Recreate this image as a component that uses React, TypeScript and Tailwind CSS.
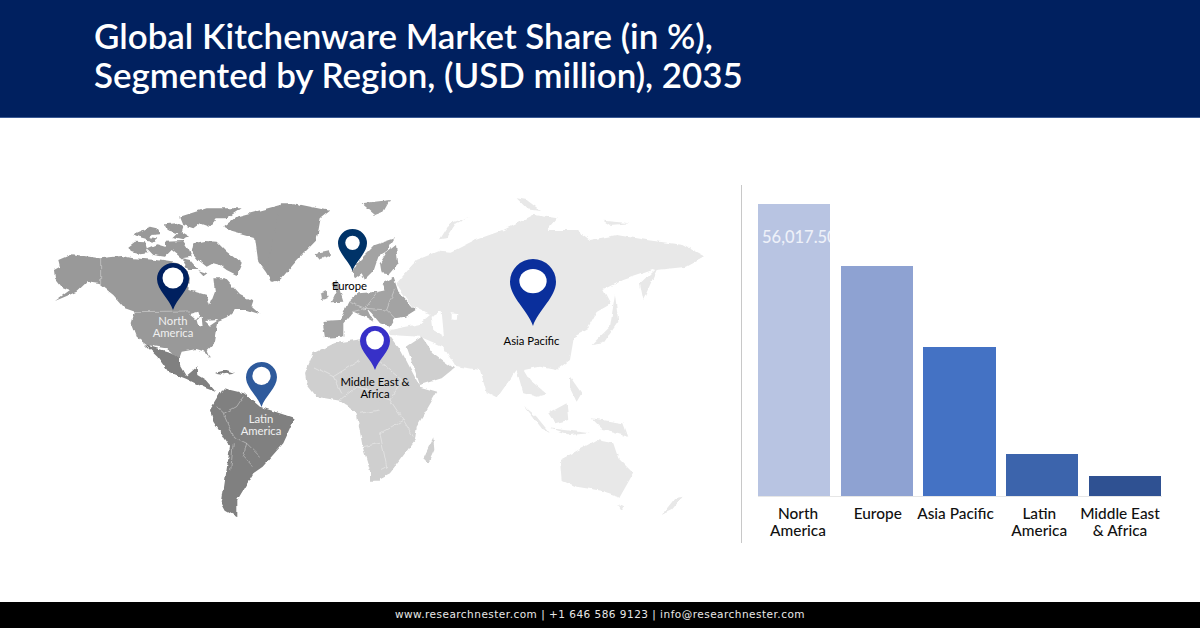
import type { ReactNode } from "react";

const font = "font-['Lato','Carlito','Liberation_Sans',sans-serif]";

const bars = [
  { name: "North America", bar: "h-[292px] bg-[#b8c4e2]", label: "w-[80px] ml-[0px]" },
  { name: "Europe", bar: "h-[230px] bg-[#8ea2d2]", label: "w-[80px] ml-[-3px]" },
  { name: "Asia Pacific", bar: "h-[149px] bg-[#4472c4]", label: "w-[90px] ml-[-10px]" },
  { name: "Latin America", bar: "h-[42px] bg-[#3c64ac]", label: "w-[80px] ml-[-5px]" },
  { name: "Middle East & Africa", bar: "h-[20px] bg-[#2f5192]", label: "w-[84px] ml-[-5px]" },
];

function Marker({ className, pin, gap, color, cy, rx, ry, text, children }: {
  className: string;
  pin: string;
  gap: string;
  color: string;
  cy: number;
  rx: number;
  ry: number;
  text: string;
  children: ReactNode;
}) {
  return (
    <div className={`absolute w-[80px] flex flex-col items-center ${className}`}>
      <svg viewBox="0 0 32 47" preserveAspectRatio="none" className={`shrink-0 ${pin}`}>
        <path d="M16 47C12.5 36 0 27 0 16A16 16 0 0 1 32 16C32 27 19.5 36 16 47Z" fill={color} />
        <ellipse cx="16" cy={cy} rx={rx} ry={ry} fill="#fff" />
      </svg>
      <p className={`text-center text-[11.3px] leading-[12px] ${gap} ${text}`}>{children}</p>
    </div>
  );
}

function WorldMap() {
  return (
    <svg viewBox="0 118 741 484" className="absolute inset-0 w-full h-full">
      <defs>
        {/* roughens the straight polygon edges into coastlines */}
        <filter id="coast" x="0" y="0" width="100%" height="100%">
          <feTurbulence type="fractalNoise" baseFrequency="0.14" numOctaves="2" seed="4" result="noise" />
          <feDisplacementMap in="SourceGraphic" in2="noise" scale="4" xChannelSelector="R" yChannelSelector="G" />
          <feGaussianBlur stdDeviation="0.35" />
        </filter>
      </defs>
      <g filter="url(#coast)">
        <rect x="0" y="118" width="741" height="484" fill="#fff" />
        {/* asia, africa, oceania */}
        <g transform="translate(370 180) scale(0.3333)">
          <g fill="#e8e8e8">
            <path d="M80 310L140 240L210 212L245 215L310 182L400 150L490 105L560 115L530 150L620 150L660 180L740 165L830 180L940 195L1005 230L950 260L860 270L820 360L810 310L855 268L760 300L700 330L722 372L680 396L650 450L612 470L600 540L560 570L510 560L462 570L480 600L530 642L500 650L460 640L440 570L380 655L350 640L330 570L255 558L220 500L150 470L60 465L62 445L150 430L180 405L130 380L88 325Z" />
            <path d="M210 178L240 130L300 110L260 130L230 175Z" />
            <path d="M440 55L470 60L510 90L470 85Z" />
            <path d="M700 122L780 130L720 135Z" />
            <path d="M665 495L720 440L735 345L745 425L700 490Z" />
            <path d="M535 700L590 670L595 720L555 730Z" />
            <path d="M465 680L500 710L540 760L515 745Z" />
            <path d="M600 590L635 640L620 665L600 625Z" />
            <path d="M665 715L760 730L775 770L700 750Z" />
            <path d="M540 745L660 760L600 765Z" />
            <path d="M570 840L680 780L730 790L745 835L790 880L750 950L695 932L620 920L575 900Z" />
            <path d="M745 975L760 980L755 990Z" />
            <path d="M875 1005L915 955L938 950L905 990Z" />
          </g>
          <g fill="#fff">
            <path d="M185 410L215 395L222 470L190 450Z" />
            <path d="M245 400L262 402L260 420L245 418Z" />
            <path d="M60 440L150 420L150 432L60 450Z" />
          </g>
          <g fill="#cfcfcf">
            <path d="M0 480L60 470L95 515L150 620L202 635L140 740L135 780L60 880L10 905L0 905Z" />
            <path d="M110 500L155 470L190 520L252 565L215 595L150 615Z" />
            <path d="M160 835L190 772L193 810L175 850Z" />
          </g>
          <g fill="none" stroke="#fff" strokeOpacity="0.55" strokeWidth="2">
            <path d="M0 520L95 600L60 660L0 640M60 660L100 720L30 760L0 750M100 720L130 770M30 760L50 860L10 880" />
          </g>
        </g>

        {/* latin america, west africa */}
        <g transform="translate(40 180) scale(0.3333)">
          <g fill="#808080">
            <path d="M315 495L350 505L420 525L420 552L440 587L470 562L472 585L497 600L528 636L498 625L470 612L440 597L385 575L352 530Z" />
            <path d="M510 690L550 625L612 640L660 680L765 715L730 790L668 860L640 880L592 960L592 1012L557 992L545 970L570 800L520 725Z" />
            <path d="M525 578L560 570L585 578L555 583Z" />
          </g>
          <path d="M795 580L820 520L880 490L960 478L1020 490L1020 905L1000 905L968 800L950 700L900 662L830 650L800 612Z" fill="#cfcfcf" />
          <g fill="none" stroke="#fff" strokeOpacity="0.55" strokeWidth="2">
            <path d="M530 680L552 700L590 680L610 650M550 700L580 770L620 790L660 830M580 790L572 870M620 790L610 830L640 860" />
            <path d="M820 560L880 590L905 640M880 590L960 540M900 660L950 620L1020 640M960 700L1020 690M970 800L1020 790" />
          </g>
        </g>

        {/* north america, greenland */}
        <g transform="translate(50 195) scale(0.3333)">
          <g fill="#999">
            <path d="M12 225L30 215L25 195L65 178L150 190L215 183L250 190L320 195L385 205L410 225L420 250L415 285L470 300L480 330L495 290L490 250L525 250L570 300L610 320L605 335L630 358L590 345L555 345L530 370L505 380L500 410L495 440L470 465L480 490L465 470L440 462L395 470L388 490L350 460L290 450L262 430L245 385L255 350L225 340L190 300L150 268L110 262L80 290L15 318L60 285L35 275L15 250Z" />
            <path d="M250 118L280 105L300 95L320 100L330 118L305 120L290 132L265 125Z" />
            <path d="M285 125L325 130L310 140L290 138Z" />
            <path d="M235 155L255 140L285 142L295 175L270 178L245 172Z" />
            <path d="M290 160L320 148L345 155L345 140L400 138L418 165L425 185L395 190L365 165L345 185L310 180Z" />
            <path d="M345 88L375 85L400 95L395 110L420 125L395 135L370 130L385 115L350 105Z" />
            <path d="M390 65L470 40L575 40L530 70L500 70L480 95L450 85L430 100L400 90Z" />
            <path d="M430 145L465 138L500 140L530 170L575 205L560 240L530 225L510 210L490 205L470 215L445 195L425 170Z" />
            <path d="M395 190L420 195L445 225L415 225Z" />
            <path d="M445 225L472 235L462 242Z" />
            <path d="M520 95L560 65L690 30L690 262L665 255L625 200L615 130L545 110Z" />
          </g>
          <g fill="#fff">
            <path d="M418 358L445 350L450 365L435 372Z" />
            <path d="M440 372L455 368L458 395L445 392Z" />
            <path d="M465 378L505 375L480 392Z" />
          </g>
          <g fill="none" stroke="#fff" strokeOpacity="0.55" strokeWidth="2">
            <path d="M152 190L152 268" />
            <path d="M255 350L420 348" />
          </g>
        </g>
        <g transform="translate(40 180) scale(0.3333)" fill="#999">
          <path d="M720 70L760 70L870 92L842 115L830 180L772 240L722 298L695 306L680 280Z" />
        </g>

        {/* europe */}
        <g transform="translate(315 195) scale(0.3333)">
          <g fill="#a3a3a3">
            <path d="M110 230L125 205L180 150L240 130L215 170L190 185L175 230L150 255L140 235L120 250Z" />
            <path d="M215 172L243 150L250 205L222 238L200 235L195 205Z" />
            <path d="M200 265L235 245L250 290L210 290Z" />
            <path d="M22 378L75 375L100 320L130 295L190 290L240 280L270 310L302 345L270 365L240 370L225 395L195 385L170 355L155 340L175 380L150 365L115 350L85 385L85 425L30 428Z" />
            <path d="M50 262L65 255L85 320L50 322L65 290Z" />
            <path d="M15 298L35 285L38 310L18 315Z" />
            <path d="M140 25L225 15L205 50L180 60Z" />
            <path d="M0 175L45 165L48 182L15 192Z" />
          </g>
          <g fill="none" stroke="#fff" strokeOpacity="0.55" strokeWidth="2">
            <path d="M100 320L150 340L190 290M150 340L215 345L240 280M215 345L240 370M115 350L150 340" />
          </g>
        </g>
      </g>
    </svg>
  );
}

export default function App() {
  return (
    <div className={`w-[1200px] h-[628px] flex flex-col bg-white overflow-hidden ${font}`}>
      <header className="h-[118px] shrink-0 bg-[#00205f] pl-[94px] pt-[16px] border-b border-[#3a5a94]">
        <h1 className="text-[34.9px] leading-[39px] font-semibold text-white whitespace-nowrap">
          Global Kitchenware Market Share (in %),
          <br />
          Segmented by Region, (USD million), 2035
        </h1>
      </header>

      <main className="flex-1 flex">
        <div className="relative w-[741px] shrink-0">
          <WorldMap />
          <Marker className="left-[133px] top-[145px]" pin="w-[32px] h-[47px]" gap="mt-[5px]" color="#00205f" cy={15} rx={10.5} ry={10.5} text="text-[#f0f0f0]">
            North<br />America
          </Marker>
          <Marker className="left-[312px] top-[111px]" pin="w-[29px] h-[42px]" gap="mt-[9px] pr-[5px]" color="#003368" cy={15.5} rx={8} ry={8} text="text-black">
            Europe
          </Marker>
          <Marker className="left-[221px] top-[244px]" pin="w-[31px] h-[45px]" gap="mt-[6px]" color="#2e5a9c" cy={14.5} rx={9.5} ry={9.5} text="text-[#f0f0f0]">
            Latin<br />America
          </Marker>
          <Marker className="left-[335px] top-[208px]" pin="w-[30px] h-[44px]" gap="mt-[6px]" color="#3730c8" cy={15} rx={9.5} ry={10} text="text-black">
            Middle East &amp;<br />Africa
          </Marker>
          <Marker className="left-[493px] top-[141px]" pin="w-[46px] h-[67px]" gap="mt-[9px] pr-[3px]" color="#0a2f9c" cy={15.5} rx={9.5} ry={8.5} text="text-black">
            Asia Pacific
          </Marker>
        </div>

        <section className="mt-[67px] h-[358px] w-[459px] border-l border-[#c8c8c8] pl-[16px]">
          <div className="h-[312px] w-[404px] flex items-end gap-[10.3px] border-b border-[#e6e6e6]">
            {bars.map((b, i) => (
              <div key={b.name} className={`w-[72.4px] overflow-hidden ${b.bar}`}>
                {i === 0 && (
                  <p className="pl-[4px] pt-[23px] text-[16.5px] leading-[20px] font-medium whitespace-nowrap text-[#eef1f9]">56,017.50</p>
                )}
              </div>
            ))}
          </div>
          <div className="w-[404px] flex gap-[2.6px] pt-[8px]">
            {bars.map((b) => (
              <div key={b.name} className="w-[80.4px] flex justify-center">
                <span className={`shrink-0 text-center text-[15.4px] leading-[17px] font-medium text-[#111] ${b.label}`}>{b.name}</span>
              </div>
            ))}
          </div>
        </section>
      </main>

      <footer className="h-[26px] shrink-0 bg-black flex items-center justify-center">
        <p className="font-['DejaVu_Sans',sans-serif] text-[10.5px] tracking-[0.48px] text-[#e8e8e8] whitespace-pre">www.researchnester.com | +1 646 586 9123 | info@researchnester.com</p>
      </footer>
    </div>
  );
}
